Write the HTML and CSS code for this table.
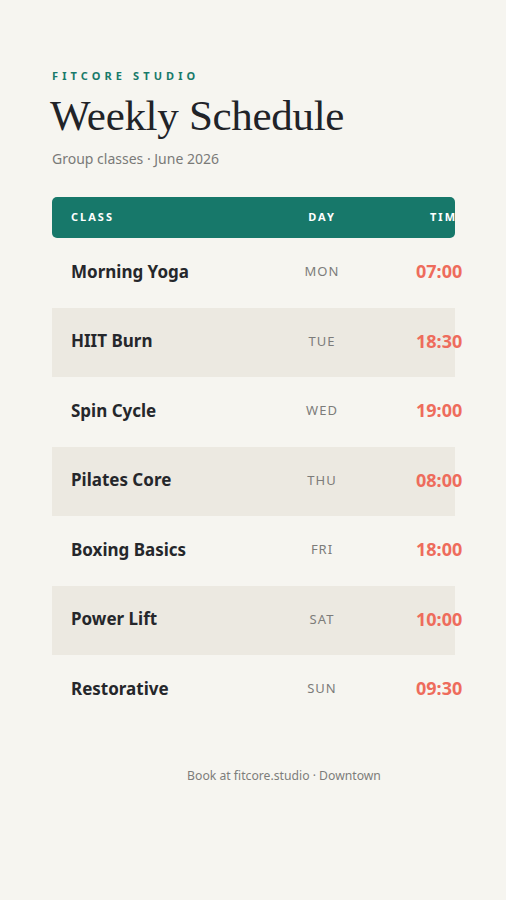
FILE: index.html
```html
<!DOCTYPE html>
<html lang="en">
<head>
<meta charset="utf-8">
<title>Weekly Schedule</title>
<link rel="stylesheet" href="styles.css">
</head>
<body>
<main class="page">
  <header class="intro">
    <div class="eyebrow">FITCORE STUDIO</div>
    <h1 class="title">Weekly Schedule</h1>
    <p class="subtitle">Group classes · June 2026</p>
  </header>
  <section class="table">
    <div class="head">
      <span class="c-class">CLASS</span>
      <span class="c-day">DAY</span>
      <span class="c-time">TIME</span>
    </div>
    <div class="row"><span class="c-class name">Morning Yoga</span><span class="c-day day">MON</span><span class="c-time time">07:00</span></div>
    <div class="row alt"><span class="c-class name">HIIT Burn</span><span class="c-day day">TUE</span><span class="c-time time">18:30</span></div>
    <div class="row"><span class="c-class name">Spin Cycle</span><span class="c-day day">WED</span><span class="c-time time">19:00</span></div>
    <div class="row alt"><span class="c-class name">Pilates Core</span><span class="c-day day">THU</span><span class="c-time time">08:00</span></div>
    <div class="row"><span class="c-class name">Boxing Basics</span><span class="c-day day">FRI</span><span class="c-time time">18:00</span></div>
    <div class="row alt"><span class="c-class name">Power Lift</span><span class="c-day day">SAT</span><span class="c-time time">10:00</span></div>
    <div class="row"><span class="c-class name">Restorative</span><span class="c-day day">SUN</span><span class="c-time time">09:30</span></div>
  </section>
  <footer class="foot">Book at fitcore.studio · Downtown</footer>
</main>
</body>
</html>
```
FILE: styles.css
```css
* { box-sizing: border-box; }
html, body { margin: 0; padding: 0; }
body {
  background: #f6f5f0;
  font-family: "Noto Sans", "Open Sans", sans-serif;
  color: #23252a;
  width: 506px;
  height: 900px;
  overflow: hidden;
}
.page {
  padding: 70px 51px 0 52px;
}
.eyebrow {
  font-size: 11px;
  font-weight: 700;
  letter-spacing: 4.1px;
  color: #187a6a;
  line-height: 12px;
}
.title {
  margin: 8px 0 0 -2px;
  font-family: "Liberation Serif", "DejaVu Serif", serif;
  font-weight: 400;
  font-size: 43px;
  line-height: 52px;
  color: #212328;
  letter-spacing: -0.3px;
}
.subtitle {
  margin: 7px 0 0;
  font-size: 14px;
  line-height: 20px;
  color: #7a7a78;
}
.table {
  margin-top: 28px;
  width: 403px;
}
.head {
  display: flex;
  align-items: center;
  height: 41px;
  background: #17786a;
  border-radius: 5px;
  overflow: hidden;
  color: #ffffff;
  font-size: 11px;
  font-weight: 700;
  letter-spacing: 2px;
  padding: 0 0 2px 19px;
  white-space: nowrap;
}
.row {
  display: flex;
  align-items: center;
  height: 69.5px;
  padding: 0 0 3px 19px;
  white-space: nowrap;
}
.row.alt { background: #ece9e1; }
.c-class { flex: none; width: 201px; }
.c-day { flex: none; width: 100px; text-align: center; margin-right: 44px; }
.c-time { flex: none; width: 60px; }
.head .c-time { padding-left: 14px; }
.name {
  font-size: 17px;
  font-weight: 700;
  color: #25272b;
}
.day {
  font-size: 13px;
  letter-spacing: 1px;
  color: #7c7c7a;
}
.time {
  font-size: 18px;
  font-weight: 700;
  color: #ee6c5c;
}
.foot {
  margin-top: 42px;
  padding-left: 61px;
  text-align: center;
  font-size: 12.2px;
  color: #7d7d7b;
}
```
